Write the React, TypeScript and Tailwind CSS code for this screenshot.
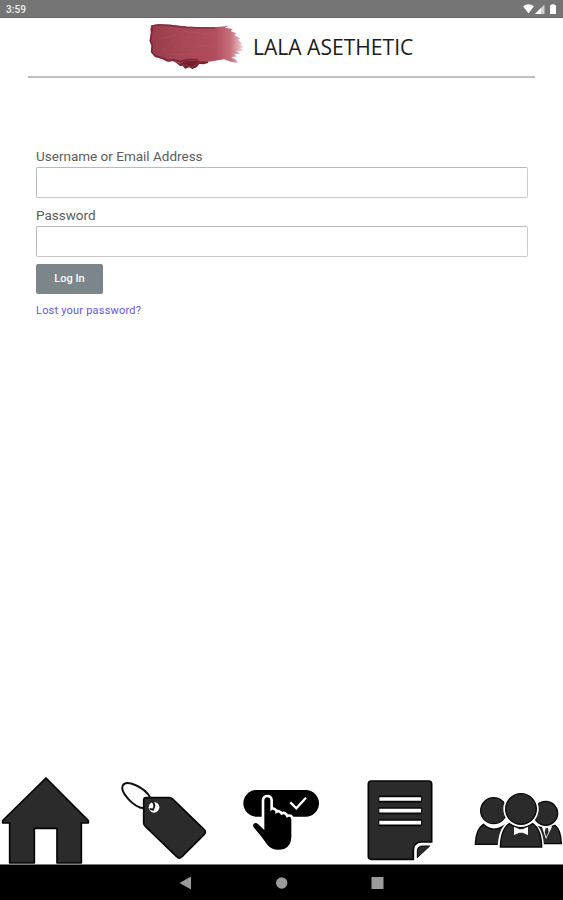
import type { ReactNode } from "react";

function StatusBar() {
  return (
    <div className="flex h-[18px] items-center justify-between border-b border-[#686868] bg-[#757575] pl-[6px] pr-[5px]">
      <span className="pt-[2px] text-[10px] font-medium leading-none tracking-[0.1px] text-white/90">3:59</span>
      <svg width="36" height="12" viewBox="0 0 36 12" fill="#fff">
        <path d="M1 3.2Q6.500-.6 12 3.200L6.500 10.400Z" />
        <path d="M13 11L22.500 1.500V11Z" opacity=".65" />
        <path d="M13 11L19 5V11Z" />
        <path d="M29.500 1.300h3v1h1.500v8.700h-6V2.300h1.500z" />
      </svg>
    </div>
  );
}

function LipstickSwatch() {
  return (
    <svg width="98" height="50" viewBox="0 0 294 150" className="shrink-0">
      <defs>
        <linearGradient id="smear" x1="0" x2="1">
          <stop offset="0" stopColor="#983c4a" />
          <stop offset=".3" stopColor="#a64655" />
          <stop offset=".7" stopColor="#b14d5d" />
          <stop offset=".86" stopColor="#c7707d" />
          <stop offset="1" stopColor="#f3d8dc" />
        </linearGradient>
      </defs>
      <path
        fill="#75202f"
        d="M76 119L101 117 155 115 161 124 181 118 184 128 171 133 157 132 149 142 136 147 126 142 114 146 107 137 99 138Z"
      />
      <path
        fill="url(#smear)"
        d="M12 16L34 12 72 14 92 17 119 20 163 21 197 22 220 20 245 17 233 23 258 27 251 33 268 40 263 46 279 54 275 61 284 68 282 76 290 81 281 85 290 92 270 93 279 101 261 103 270 109 253 112 268 119 272 129 251 125 231 118 186 125 151 122 116 123 99 132 77 124 61 125 45 117 23 111 12 96 14 78 8 62 14 44 10 30Z"
      />
      <path
        d="M16 21L13 42 10 62 16 77 14 96 26 108 47 115 65 122 82 119 100 125 119 119 154 119"
        fill="none"
        stroke="#7c2737"
        strokeWidth="5"
        strokeLinejoin="round"
      />
      <path
        d="M15 18L37 15 71 17 91 19 119 22 160 24 205 24"
        fill="none"
        stroke="#873040"
        strokeWidth="5"
        strokeLinejoin="round"
      />
      <path
        d="M39 57L91 45M46 93L82 60M99 92L125 44M136 100L175 42M109 35L207 43M148 78L237 81M66 104L167 104"
        fill="none"
        stroke="#bf6470"
        strokeWidth="3"
        opacity=".22"
      />
      <path d="M108 134L136 142 156 127 180 124" fill="none" stroke="#9d3e4e" strokeWidth="3" opacity=".7" />
    </svg>
  );
}

function Header() {
  return (
    <header className="mx-[28px] flex h-[60px] items-start border-b-2 border-[#bfbfbf] pl-[119px] pt-[2px]">
      <LipstickSwatch />
      <h1 className="ml-[8px] mt-[13px] whitespace-nowrap font-['Open_Sans',sans-serif] text-[21.5px] leading-[28px] text-[#1c1c1c]">
        <span className="inline-block origin-left scale-x-[0.98]">LALA ASETHETIC</span>
      </h1>
    </header>
  );
}

function Field({ id, label, type }: { id: string; label: string; type: string }) {
  return (
    <div>
      <label htmlFor={id} className="block h-[21px] text-[13.5px] leading-[20px] text-[#5c5c5c]">
        {label}
      </label>
      <input
        id={id}
        type={type}
        className="block h-[31px] w-full rounded-[2px] border border-[#bababa] border-b-[#c8c8c8] border-r-[#cecece] bg-white px-3 text-sm outline-none"
      />
    </div>
  );
}

function LoginForm() {
  return (
    <form className="ml-[36px] mr-[35px] mt-[68px]" onSubmit={(e) => e.preventDefault()}>
      <div className="flex flex-col gap-[7px]">
        <Field id="username" label="Username or Email Address" type="text" />
        <Field id="password" label="Password" type="password" />
      </div>
      <button type="submit" className="mt-[7px] block h-[30px] w-[67px] rounded-[2px] bg-[#7b858a] pt-px text-[11px] font-medium text-white">
        Log In
      </button>
      <a href="#lost" className="mt-[8px] block w-fit text-[11px] leading-[18px] tracking-[0.21px] text-[#6455ec]">
        Lost your password?
      </a>
    </form>
  );
}

function NavIcon({ label, className, viewBox, children }: { label: string; className: string; viewBox: string; children: ReactNode }) {
  return (
    <a href="#" aria-label={label} className={className}>
      <svg className="block h-full w-full" viewBox={viewBox}>
        {children}
      </svg>
    </a>
  );
}

function BottomNav() {
  return (
    <nav className="flex h-[100px] items-start border-b border-[#777]">
      <NavIcon label="Home" className="h-[99px] w-[110px]" viewBox="0 0 330 297">
        <path d="M138 39L265 167V174H244V294H171V190H103V294H29V174H8V167Z" fill="#2b2b2b" stroke="#050505" strokeWidth="5" strokeLinejoin="round" />
      </NavIcon>
      <NavIcon label="Prices" className="h-[99px] w-[120px]" viewBox="0 0 360 297">
        <path d="M108 98H178Q184 98 189 103L282 193Q290 200 283 208L216 275Q208 283 200 275L106 184Q101 180 101 174V106Q101 98 108 98Z" fill="#2b2b2b" stroke="#050505" strokeWidth="5" />
        <circle cx="132" cy="127" r="16" fill="#fff" />
        <path d="M101 130C70 127 29 80 38 62C48 43 101 63 122 99" fill="none" stroke="#111" strokeWidth="6" />
        <path d="M124 106Q139 119 129 134Q124 132 119 132" fill="none" stroke="#222" strokeWidth="6" />
      </NavIcon>
      <NavIcon label="Book" className="h-[99px] w-[120px]" viewBox="0 0 360 297">
        <rect x="40" y="75" width="227" height="80" rx="40" fill="#000" />
        <path d="M181 112L199 130 228 98" fill="none" stroke="#fff" strokeWidth="7" />
        <path
          d="M103 202V106C103 94 121 94 121 106V139Q127 129 136 139V147Q147 136 154 151Q164 142 170 158Q184 150 184 167V212Q184 254 145 254Q124 254 112 239L91 211 71 187C65 177 76 170 84 177L103 195"
          fill="#000"
          stroke="#fff"
          strokeWidth="16"
          strokeLinejoin="round"
        />
        <path
          d="M103 202V106C103 94 121 94 121 106V139Q127 129 136 139V147Q147 136 154 151Q164 142 170 158Q184 150 184 167V212Q184 254 145 254Q124 254 112 239L91 211 71 187C65 177 76 170 84 177L103 195Z"
          fill="#000"
        />
      </NavIcon>
      <NavIcon label="Notes" className="h-[99px] w-[110px]" viewBox="0 0 330 297">
        <path d="M64 48H236Q245 48 245 57V231H215Q190 231 190 256V283H64Q55 283 55 274V57Q55 48 64 48Z" fill="#2b2b2b" stroke="#050505" strokeWidth="5" />
        <path d="M86 102H215M86 137H215M86 173H215" stroke="#050505" strokeWidth="21" />
        <path d="M88 102H213M88 137H213M88 173H213" stroke="#fff" strokeWidth="11" />
        <path d="M202 278V258Q202 243 218 243H239Z" fill="#2b2b2b" stroke="#050505" strokeWidth="3" />
      </NavIcon>
      <NavIcon label="Team" className="h-[99px] w-[103px]" viewBox="0 0 309 297">
        <g fill="#2b2b2b" stroke="#080808" strokeWidth="4">
          <circle cx="101" cy="137" r="39" />
          <path d="M46 238Q47 193 70 178Q98 205 134 181V238Z" />
          <circle cx="257" cy="145" r="36" />
          <path d="M230 236V184Q257 194 285 181Q303 195 304 236Z" />
          <path d="M245 184L258 222 277 184Z" fill="#fff" stroke="none" />
          <path d="M257 189H264L266 201 259 216 254 201Z" stroke="none" />
          <circle cx="183" cy="132" r="53" fill="#fff" stroke="none" />
          <path d="M113 252Q114 185 148 168H216Q252 187 252 252Z" fill="#fff" stroke="none" />
          <circle cx="183" cy="132" r="46" />
          <path d="M121 246Q123 192 148 176Q183 200 218 176Q244 193 245 246Z" />
          <path d="M162 185L178 193H188L204 185V210L188 203H178L162 210Z" fill="#fff" stroke="none" />
        </g>
      </NavIcon>
    </nav>
  );
}

function SystemBar() {
  return (
    <div className="flex h-[35px] items-center bg-black pl-[179px]">
      <svg width="205" height="14" viewBox="0 0 205 14" fill="#9b9b9b">
        <path d="M.500 7L12 .500V13.500Z" />
        <circle cx="102.700" cy="7" r="5.700" />
        <rect x="192.500" y="1" width="12" height="12" />
      </svg>
    </div>
  );
}

export default function App() {
  return (
    <div className="flex h-[900px] w-[563px] flex-col overflow-hidden bg-white font-[Roboto,sans-serif]">
      <StatusBar />
      <Header />
      <main className="flex-1">
        <LoginForm />
      </main>
      <BottomNav />
      <SystemBar />
    </div>
  );
}
